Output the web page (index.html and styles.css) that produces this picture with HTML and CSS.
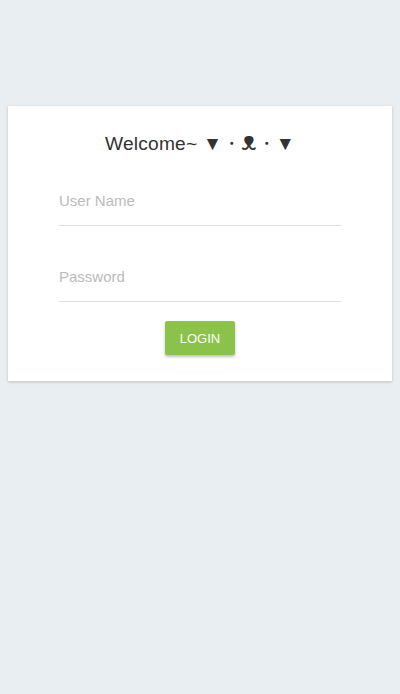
FILE: index.html
```html
<!DOCTYPE html>
<html>
<head>
<meta charset="utf-8">
<link rel="stylesheet" href="styles.css">
</head>
<body>
<div class="card">
  <h1 class="title">Welcome~ ▼・<span class="face">ᴥ</span>・▼</h1>
  <form class="form">
    <div class="field"><input class="input" type="text" placeholder="User Name"></div>
    <div class="field"><input class="input" type="password" placeholder="Password"></div>
    <div class="actions"><button class="btn" type="button">LOGIN</button></div>
  </form>
</div>
</body>
</html>
```
FILE: styles.css
```css
html, body { margin: 0; padding: 0; }
body {
  background: #e9eef2;
  font-family: "Liberation Sans", Arial, sans-serif;
  padding: 106px 8px 0;
  height: 694px;
  box-sizing: border-box;
}
.card {
  background: #fff;
  box-shadow: 0 1px 3px rgba(0,0,0,0.2);
  padding: 20px 51px 26px;
}
.title {
  margin: 0;
  text-align: center;
  font-weight: normal;
  font-size: 19.2px;
  line-height: 36px;
  letter-spacing: 0.2px;
  color: #333;
}
.face { font-size: 25px; line-height: 0; }
.form { margin: 0; }
.field {
  height: 76px;
  display: flex;
  align-items: flex-end;
}
.field:first-child { height: 64px; }
.input {
  width: 100%;
  border: none;
  border-bottom: 1px solid #ddd;
  outline: none;
  font-family: "Liberation Sans", Arial, sans-serif;
  font-size: 15px;
  padding: 0 0 16px;
  color: #333;
  background: transparent;
}
.input::placeholder { color: #bbb; }
.actions {
  display: flex;
  justify-content: center;
  padding-top: 19px;
}
.btn {
  background: #8bc34a;
  color: #fff;
  border: none;
  border-radius: 2px;
  font-family: "Liberation Sans", Arial, sans-serif;
  font-size: 13px;
  height: 34px;
  padding: 0 15px;
  box-shadow: 0 2px 3px rgba(0,0,0,0.25);
}
```
